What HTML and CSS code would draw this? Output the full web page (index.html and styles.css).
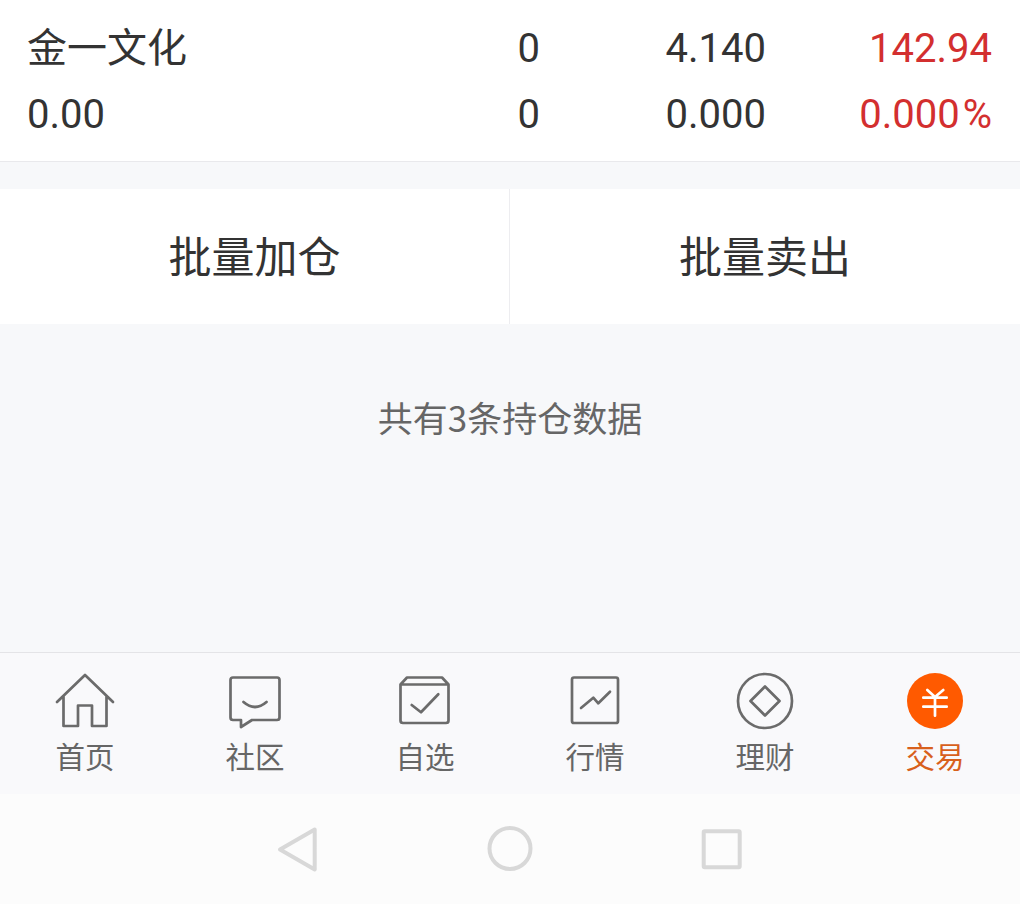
FILE: index.html
```html
<!DOCTYPE html>
<html lang="zh-CN">
<head>
    <meta charset="UTF-8">
    <meta name="viewport" content="width=device-width, initial-scale=1.0">
    <title>交易</title>
    <link rel="stylesheet" href="styles.css">
</head>
<body>

<div class="holding">
    <div class="cell name">金一文化</div>
    <div class="cell num">0</div>
    <div class="cell num">4.140</div>
    <div class="cell num red">142.94</div>
    <div class="cell">0.00</div>
    <div class="cell num">0</div>
    <div class="cell num">0.000</div>
    <div class="cell num red">0.000<span class="pct">%</span></div>
</div>

<div class="actions">
    <div class="action first">批量加仓</div>
    <div class="action">批量卖出</div>
</div>

<div class="message">共有3条持仓数据</div>

<div class="tabbar">
    <div class="tab">
        <svg class="tab-icon" viewBox="0 0 64 64"><path d="M4 32 32 5 60 32M10.5 26V56H25V35.5H39V56H53.5V26"/></svg>
        <span>首页</span>
    </div>
    <div class="tab">
        <svg class="tab-icon" viewBox="0 0 64 64"><path d="M10 7.5H54a2.500 2.500 0 0 1 2.500 2.500V47.500a2.500 2.500 0 0 1-2.500 2.500H29L18 57V50H10a2.500 2.500 0 0 1-2.500-2.500V10A2.500 2.500 0 0 1 10 7.500ZM20.500 32Q32 42 43.500 32"/></svg>
        <span>社区</span>
    </div>
    <div class="tab">
        <svg class="tab-icon" viewBox="0 0 64 64"><path d="M14 7.500H49L55.500 14.500V50.500a2.500 2.500 0 0 1-2.500 2.500H10a2.500 2.500 0 0 1-2.500-2.500V14.500ZM7.500 14.500H55.500M18.700 35 28 42.300 45.300 24.300"/></svg>
        <span>自选</span>
    </div>
    <div class="tab">
        <svg class="tab-icon" viewBox="0 0 64 64"><path d="M11 7.500H53a2 2 0 0 1 2 2V51a2 2 0 0 1-2 2H11a2 2 0 0 1-2-2V9.500a2 2 0 0 1 2-2ZM18 38 30.300 27.700 35.300 33.300 47 21.700"/></svg>
        <span>行情</span>
    </div>
    <div class="tab">
        <svg class="tab-icon" viewBox="0 0 64 64"><circle cx="32" cy="31" r="27"/><path d="M32 16.500 46.500 31 32 45.500 17.500 31Z"/></svg>
        <span>理财</span>
    </div>
    <div class="tab active">
        <svg class="tab-icon" viewBox="0 0 64 64"><circle class="coin" cx="32" cy="31" r="28"/><path class="coin-mark" d="M24.300 20 32 27 40.300 20M20.300 27.700H43.700M20.300 36.700H43.700M32 27V45.700"/></svg>
        <span>交易</span>
    </div>
</div>

<div class="navbar">
    <svg class="nav-icon" viewBox="0 0 48 48"><path d="M40.700 4.500 6 24.500 40.700 44.500Z"/></svg>
    <svg class="nav-icon" viewBox="0 0 48 48"><circle cx="24" cy="23.500" r="20.500"/></svg>
    <svg class="nav-icon" viewBox="0 0 48 48"><rect x="5.700" y="6.300" width="36" height="36" rx="1"/></svg>
</div>

</body>
</html>
```

FILE: styles.css
```css
body {
    font-family: Roboto, "Noto Sans CJK SC", sans-serif;
    background-color: #f7f8fa;
    color: #333;
    margin: 0;
    height: 904px;
    display: flex;
    flex-direction: column;
    overflow: hidden;
}
.holding {
    display: grid;
    grid-template-columns: 1fr 226px 226px 226px;
    grid-auto-rows: 66px;
    padding: 16px 28px 13px 27px;
    background-color: #fff;
    border-bottom: 1px solid #e9e9ec;
    font-size: 40px;
}
.cell {
    line-height: 66px;
}
.name {
    font-family: "Noto Sans CJK SC", sans-serif;
    line-height: 58px;
}
.num {
    text-align: right;
}
.red {
    color: #d32f2f;
}
.pct {
    margin-left: 3px;
}
.actions {
    display: flex;
    height: 135px;
    margin-top: 27px;
    background-color: #fff;
}
.action {
    flex: 1;
    display: flex;
    align-items: center;
    justify-content: center;
    padding-bottom: 5px;
    font-family: "Noto Sans CJK SC", sans-serif;
    font-size: 43px;
}
.action.first {
    flex: none;
    width: 509px;
}
.action + .action {
    border-left: 1px solid #ededf0;
}
.message {
    flex: 1;
    padding-top: 68px;
    text-align: center;
    font-family: "Noto Sans CJK SC", sans-serif;
    font-size: 35px;
    line-height: 50px;
    color: #666;
}
.tabbar {
    display: flex;
    height: 141px;
    background-color: #f9f9fb;
    border-top: 1px solid #e4e4e7;
}
.tab {
    flex: 1;
    display: flex;
    flex-direction: column;
    align-items: center;
    padding-top: 17px;
    font-family: "Noto Sans CJK SC", sans-serif;
    font-size: 29.500px;
    line-height: 40px;
    color: #666;
}
.tab.active {
    color: #d8601c;
}
.tab-icon {
    width: 64px;
    height: 64px;
    margin-bottom: 1px;
    fill: none;
    stroke: #6b6b6b;
    stroke-width: 2.700;
    stroke-linecap: round;
    stroke-linejoin: round;
}
.coin {
    fill: #ff5a00;
    stroke: none;
}
.coin-mark {
    stroke: #fff;
}
.navbar {
    display: flex;
    align-items: center;
    justify-content: center;
    gap: 164px;
    height: 110px;
    background-color: #fcfcfc;
}
.nav-icon {
    width: 48px;
    height: 48px;
    fill: none;
    stroke: #d8d8d8;
    stroke-width: 4;
    stroke-linejoin: round;
}
```
